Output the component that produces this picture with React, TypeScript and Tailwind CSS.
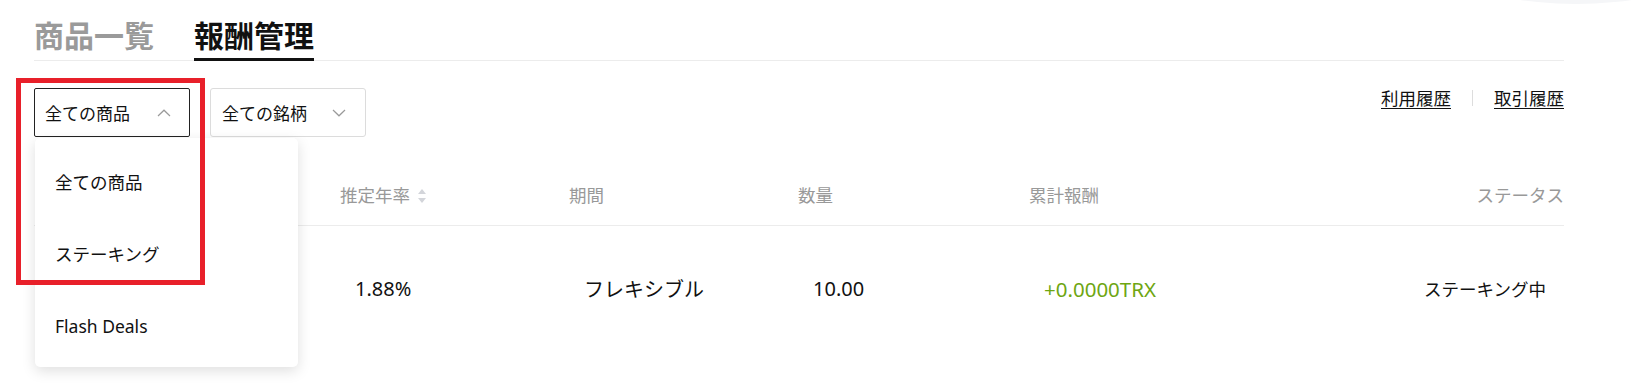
import React from "react";

function ChevronUp() {
  return (
    <svg width="14" height="8" viewBox="0 0 14 8" fill="none">
      <polyline points="1,7 7,1.2 13,7" stroke="#9a9a9a" strokeWidth="1.2" />
    </svg>
  );
}

function ChevronDown() {
  return (
    <svg width="14" height="8" viewBox="0 0 14 8" fill="none">
      <polyline points="1,1 7,6.8 13,1" stroke="#9a9a9a" strokeWidth="1.2" />
    </svg>
  );
}

function SortIcon() {
  return (
    <svg width="8" height="16" viewBox="0 0 8 16" className="ml-[8px]">
      <polygon points="4,1 8,6 0,6" fill="#d3d5da" />
      <polygon points="0,10 8,10 4,15" fill="#d3d5da" />
    </svg>
  );
}

export default function App() {
  return (
    <div className="relative w-[1650px] h-[383px] overflow-hidden bg-white font-['Noto_Sans','Noto_Sans_CJK_JP',sans-serif]">
      {/* faint decoration top-right */}
      <div className="absolute left-[1182px] top-[-784px] w-[788px] h-[788px] rounded-full bg-[#f5f6f8]" />

      <div className="relative pl-[34px] pr-[86px]">
        {/* Tabs */}
        <div className="flex gap-[40px] border-b border-[#ececec] pt-[19px]">
          <div className="text-[30px] leading-[30px] font-bold text-[#9a9a9a] pb-[11px] font-['Noto_Sans_CJK_JP',sans-serif]">
            商品一覧
          </div>
          <div className="text-[30px] leading-[30px] font-bold text-[#111] pb-[9px] border-b-[3px] border-[#111] -mb-px font-['Noto_Sans_CJK_JP',sans-serif]">
            報酬管理
          </div>
        </div>

        {/* Filters */}
        <div className="mt-[27px] flex justify-between items-start">
          <div className="flex gap-[20px]">
            <div className="relative">
              <div className="w-[156px] h-[49px] border border-[#222] rounded-[2px] pl-[10px] pr-[18px] flex items-center justify-between">
                <span className="text-[17px] text-[#111] font-['Noto_Sans_CJK_JP',sans-serif]">全ての商品</span>
                <ChevronUp />
              </div>
              {/* dropdown */}
              <div className="absolute left-[1px] top-[50px] z-10 w-[263px] h-[229px] bg-white rounded-[5px] shadow-[0_4px_14px_rgba(0,0,0,0.13)] pt-[8px]">
                <div className="h-[72px] flex items-center pl-[20px] text-[17.5px] text-[#111] font-['Noto_Sans_CJK_JP',sans-serif]">全ての商品</div>
                <div className="h-[72px] flex items-center pl-[20px] text-[17.5px] text-[#111] font-['Noto_Sans_CJK_JP',sans-serif]">ステーキング</div>
                <div className="h-[72px] flex items-center pl-[20px] text-[17.5px] text-[#111]">Flash Deals</div>
              </div>
            </div>
            <div className="w-[156px] h-[49px] border border-[#dcdcdc] rounded-[3px] pl-[11px] pr-[19px] flex items-center justify-between">
              <span className="text-[17px] text-[#111] font-['Noto_Sans_CJK_JP',sans-serif]">全ての銘柄</span>
              <ChevronDown />
            </div>
          </div>
          <div className="flex items-center h-[20px] text-[17.5px] text-[#111] font-['Noto_Sans_CJK_JP',sans-serif]">
            <span className="underline underline-offset-[3px]">利用履歴</span>
            <span className="mx-[21px] w-px h-[16px] bg-[#dddddd]" />
            <span className="underline underline-offset-[3px]">取引履歴</span>
          </div>
        </div>

        {/* Table */}
        <div className="mt-[29px]">
          <div className="grid grid-cols-[306px_229px_229px_231px_1fr_200px] h-[60px] items-center border-b border-[#ececec] text-[17.5px] text-[#999] font-['Noto_Sans_CJK_JP',sans-serif]">
            <div />
            <div className="flex items-center">
              推定年率
              <SortIcon />
            </div>
            <div>期間</div>
            <div>数量</div>
            <div>累計報酬</div>
            <div className="text-right">ステータス</div>
          </div>
          <div className="grid grid-cols-[306px_229px_229px_231px_1fr_200px] h-[126px] items-center text-[#111]">
            <div />
            <div className="pl-[15px] text-[20px]">1.88%</div>
            <div className="pl-[15px] text-[20px] font-['Noto_Sans_CJK_JP',sans-serif]">フレキシブル</div>
            <div className="pl-[15px] text-[20px]">10.00</div>
            <div className="pl-[15px] text-[20.5px] text-[#6ea612]">+0.0000TRX</div>
            <div className="text-right pr-[18px] text-[17.5px] font-['Noto_Sans_CJK_JP',sans-serif]">ステーキング中</div>
          </div>
        </div>
      </div>

      {/* red highlight annotation */}
      <div className="absolute left-[16px] top-[78px] w-[189px] h-[207px] border-[5px] border-[#e8202a] z-20" />
    </div>
  );
}
